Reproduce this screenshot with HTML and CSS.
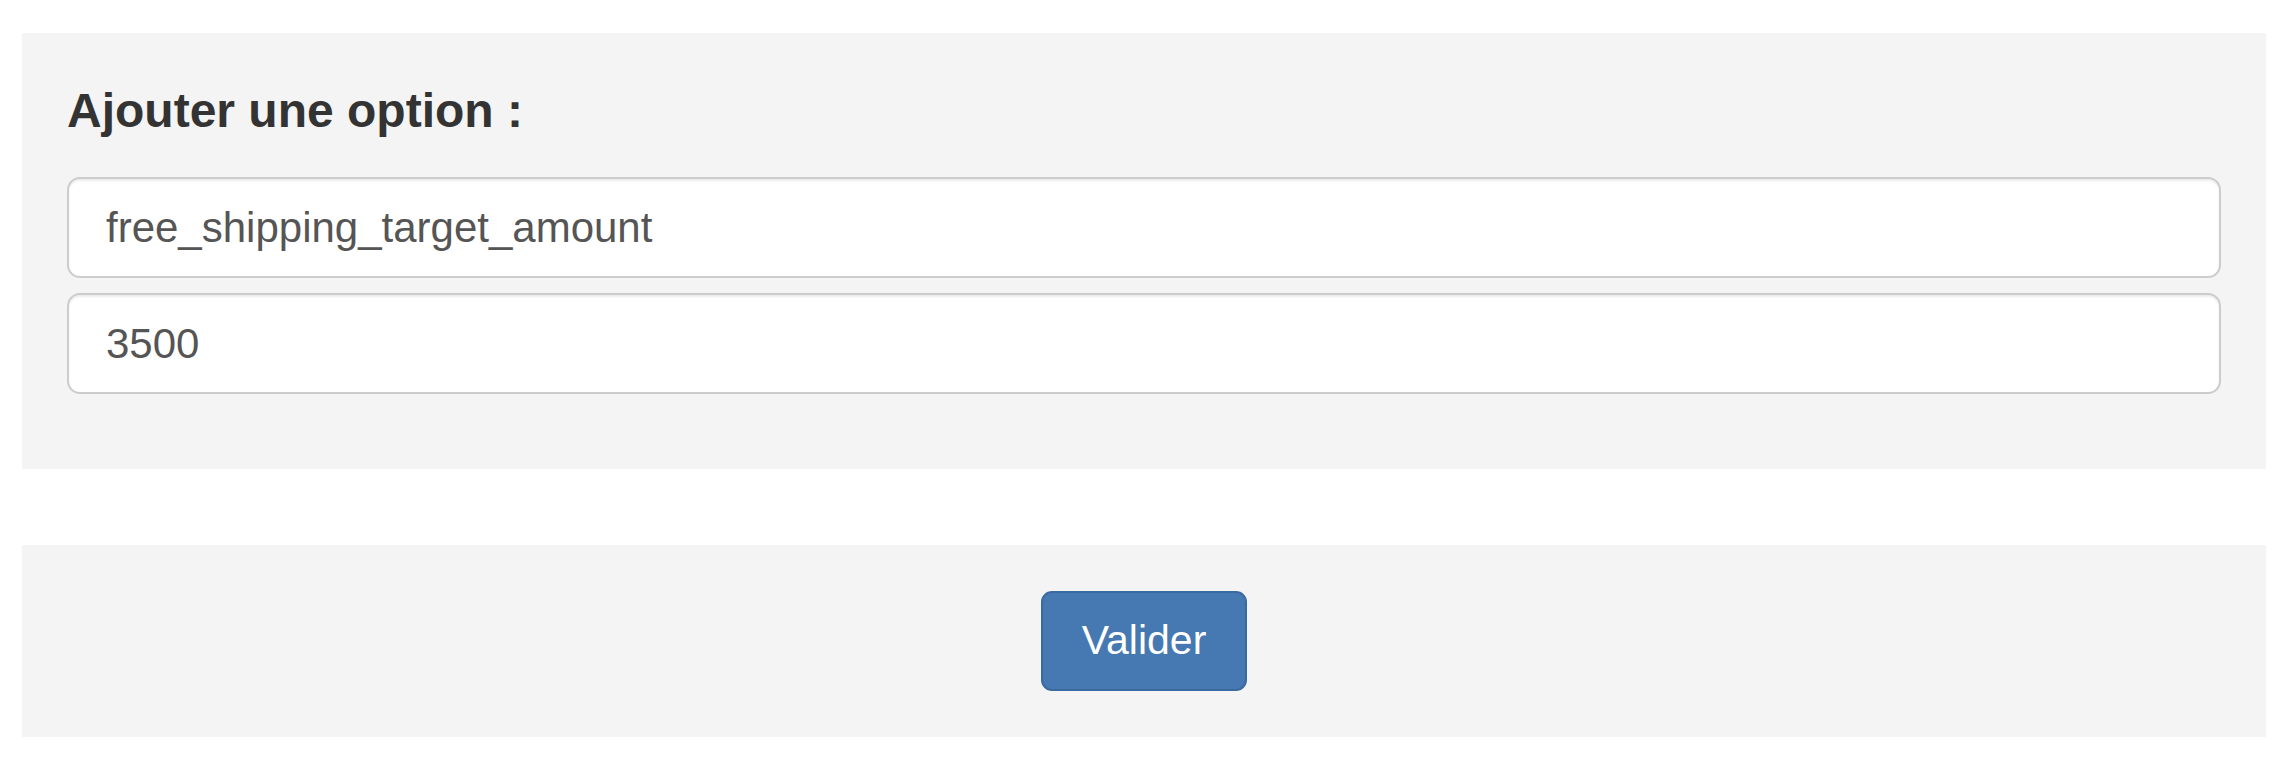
FILE: index.html
```html
<!DOCTYPE html>
<html lang="fr">
<head>
<meta charset="utf-8">
<title>Ajouter une option</title>
<link rel="stylesheet" href="styles.css">
</head>
<body>
<div class="page">
  <form class="option-form">
    <section class="panel panel-fields">
      <h3 class="panel-title">Ajouter une option :</h3>
      <div class="fields">
        <input class="field" type="text" name="option_name" value="free_shipping_target_amount">
        <input class="field" type="text" name="option_value" value="3500">
      </div>
    </section>
    <section class="panel panel-actions">
      <button class="btn-primary" type="button">Valider</button>
    </section>
  </form>
</div>
</body>
</html>
```

FILE: styles.css
```css
html, body {
  margin: 0;
  padding: 0;
  background: #ffffff;
}

.page {
  padding: 33px 20px 0 22px;
  font-family: "Liberation Sans", Arial, Helvetica, sans-serif;
}

.option-form {
  display: flex;
  flex-direction: column;
  gap: 76px;
}

.panel {
  background: #f4f4f4;
}

.panel-fields {
  padding: 52px 45px 75px 45px;
  display: flex;
  flex-direction: column;
  gap: 39px;
}

.panel-title {
  margin: 0;
  font-size: 48px;
  line-height: 1.1;
  font-weight: bold;
  color: #333333;
}

.fields {
  display: flex;
  flex-direction: column;
  gap: 15px;
}

.field {
  box-sizing: border-box;
  display: block;
  width: 100%;
  height: 101px;
  margin: 0;
  padding: 2px 37px 0 37px;
  border: 2px solid #cccccc;
  border-radius: 13px;
  background: #ffffff;
  box-shadow: inset 0 2px 2px rgba(0, 0, 0, 0.075);
  font-family: "Liberation Sans", Arial, Helvetica, sans-serif;
  font-size: 42px;
  color: #555555;
  outline: none;
}

.panel-actions {
  height: 192px;
  display: flex;
  align-items: center;
  justify-content: center;
}

.btn-primary {
  box-sizing: border-box;
  width: 206px;
  height: 100px;
  margin: 0;
  padding: 0;
  border: 2px solid #3a6aa1;
  border-radius: 11px;
  background: #4679b2;
  color: #ffffff;
  font-family: "Liberation Sans", Arial, Helvetica, sans-serif;
  font-size: 41px;
  cursor: pointer;
}
```
